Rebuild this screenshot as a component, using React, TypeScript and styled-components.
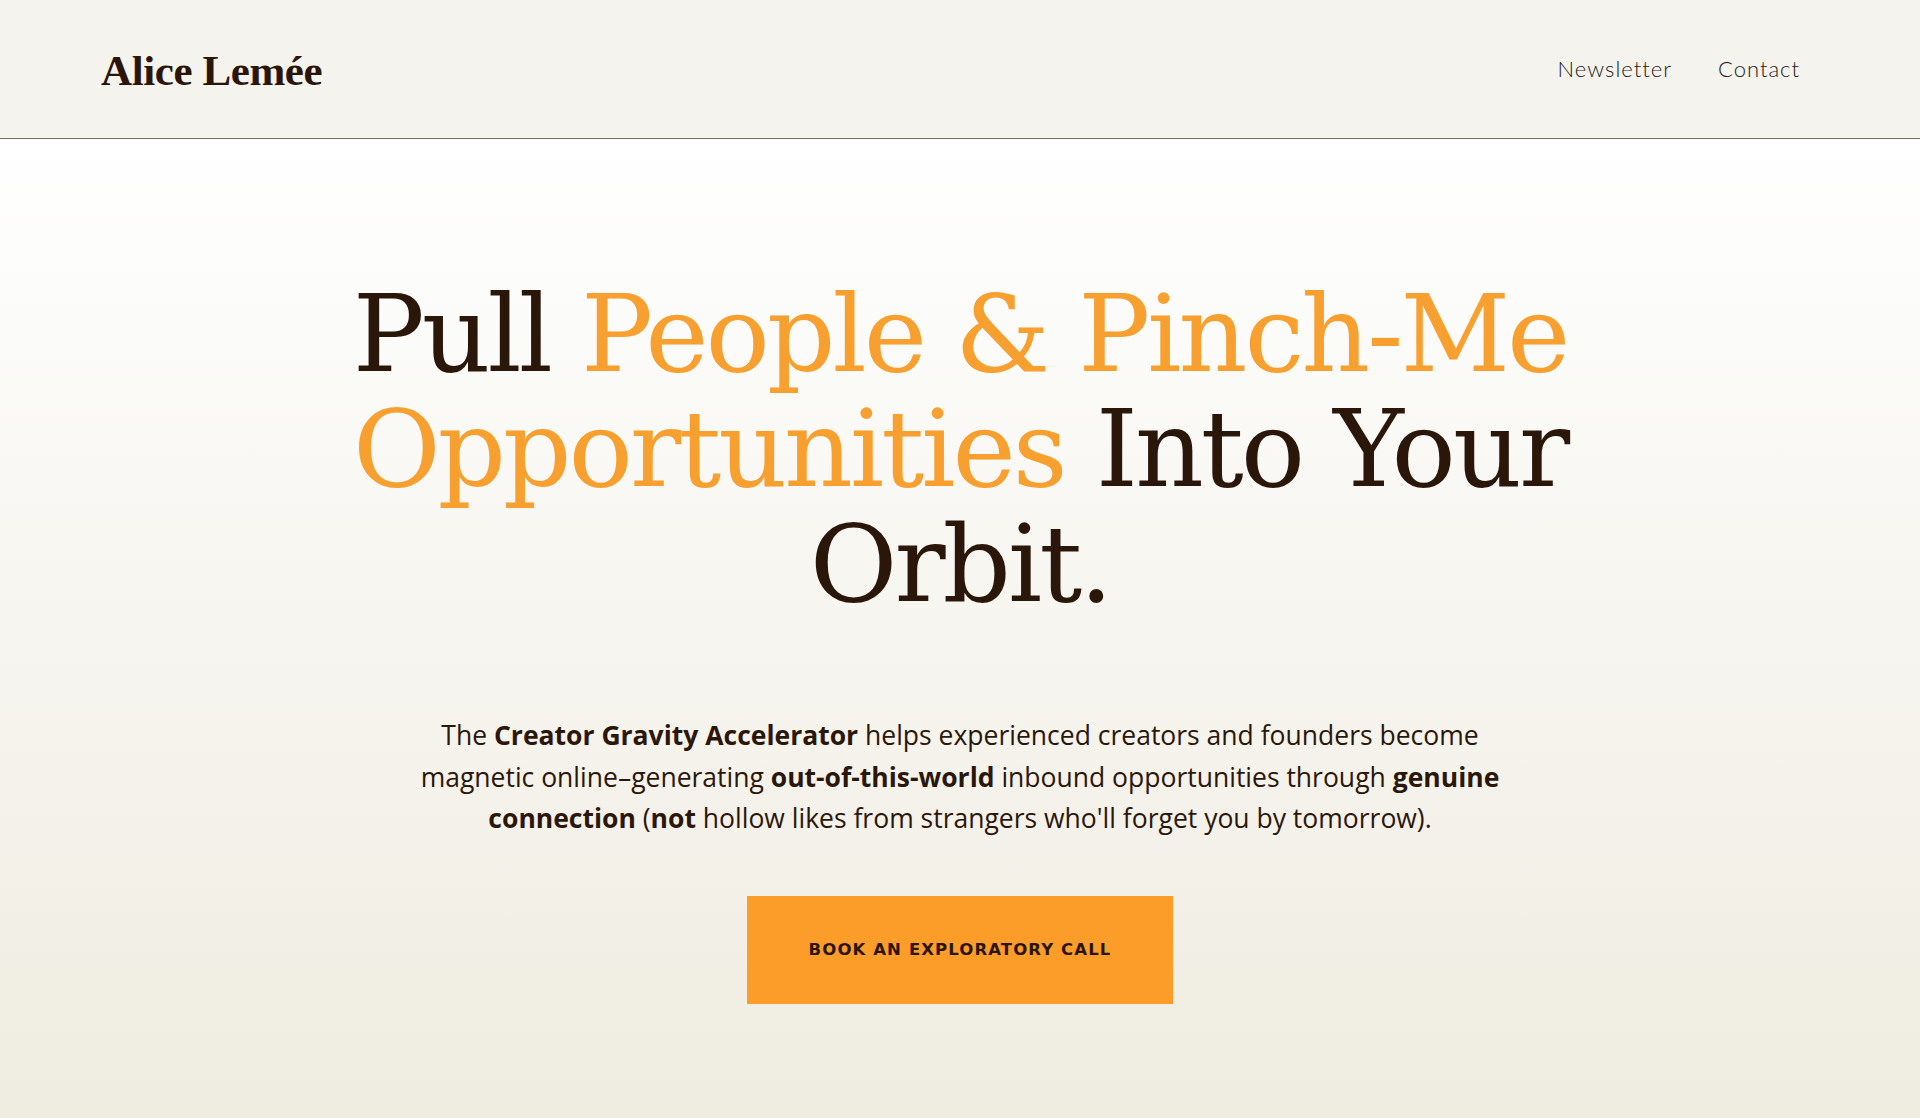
import React from "react";
import styled, { createGlobalStyle } from "styled-components";

const GlobalStyle = createGlobalStyle`
  html, body {
    margin: 0;
    padding: 0;
    background: #efece0;
  }
  * { box-sizing: border-box; }
`;

const Page = styled.div`
  min-height: 100vh;
  display: flex;
  flex-direction: column;
`;

const Header = styled.header`
  height: 139px;
  display: flex;
  align-items: center;
  justify-content: space-between;
  padding: 0 120px 0 101px;
  background: #f5f3ee;
  border-bottom: 1.5px solid #6e6c68;
`;

const Logo = styled.a`
  font-family: "Liberation Serif", "Times New Roman", serif;
  font-weight: 700;
  font-size: 43px;
  letter-spacing: -0.4px;
  color: #2a1508;
  text-decoration: none;
  line-height: 1;
  margin-top: 2px;
`;

const Nav = styled.nav`
  display: flex;
  align-items: center;
  gap: 46px;
`;

const NavLink = styled.a`
  font-family: Lato, "Open Sans", sans-serif;
  font-weight: 300;
  font-size: 22px;
  letter-spacing: 1px;
  color: #1f1915;
  text-decoration: none;
  line-height: 1;
`;

const Hero = styled.main`
  flex: 1;
  display: flex;
  flex-direction: column;
  align-items: center;
  padding: 138px 0 80px;
  background: linear-gradient(180deg, #ffffff 0%, #f7f6f1 45%, #efece0 100%);
`;

const Headline = styled.h1`
  margin: 0;
  font-family: "DejaVu Serif", "Noto Serif", Georgia, serif;
  font-weight: 400;
  font-size: 107px;
  line-height: 115px;
  letter-spacing: -3px;
  text-align: center;
  color: #2b1709;
`;

const Accent = styled.span`
  color: #f7a030;
`;

const Lead = styled.p`
  margin: 93px 0 0;
  font-family: "Open Sans", "Noto Sans", sans-serif;
  font-weight: 400;
  font-size: 26.5px;
  line-height: 41.5px;
  text-align: center;
  color: #2b1709;

  strong {
    font-weight: 700;
  }
`;

const CTA = styled.a`
  margin-top: 56px;
  width: 426px;
  height: 108px;
  display: flex;
  align-items: center;
  justify-content: center;
  background: #fd9d29;
  font-family: "DejaVu Sans", Verdana, sans-serif;
  font-weight: 700;
  font-size: 16.5px;
  letter-spacing: 1.1px;
  color: #2a1508;
  text-decoration: none;
  text-transform: uppercase;
`;

export default function App() {
  return (
    <>
      <GlobalStyle />
      <Page>
        <Header>
          <Logo href="#">Alice Lemée</Logo>
          <Nav>
            <NavLink href="#">Newsletter</NavLink>
            <NavLink href="#">Contact</NavLink>
          </Nav>
        </Header>
        <Hero>
          <Headline>
            Pull <Accent>People &amp; Pinch-Me</Accent>
            <br />
            <Accent>Opportunities</Accent> Into Your
            <br />
            Orbit.
          </Headline>
          <Lead>
            The <strong>Creator Gravity Accelerator</strong> helps experienced creators and founders become
            <br />
            magnetic online–generating <strong>out-of-this-world</strong> inbound opportunities through{" "}
            <strong>genuine</strong>
            <br />
            <strong>connection</strong> (<strong>not</strong> hollow likes from strangers who'll forget you by tomorrow).
          </Lead>
          <CTA href="#">Book an exploratory call</CTA>
        </Hero>
      </Page>
    </>
  );
}
